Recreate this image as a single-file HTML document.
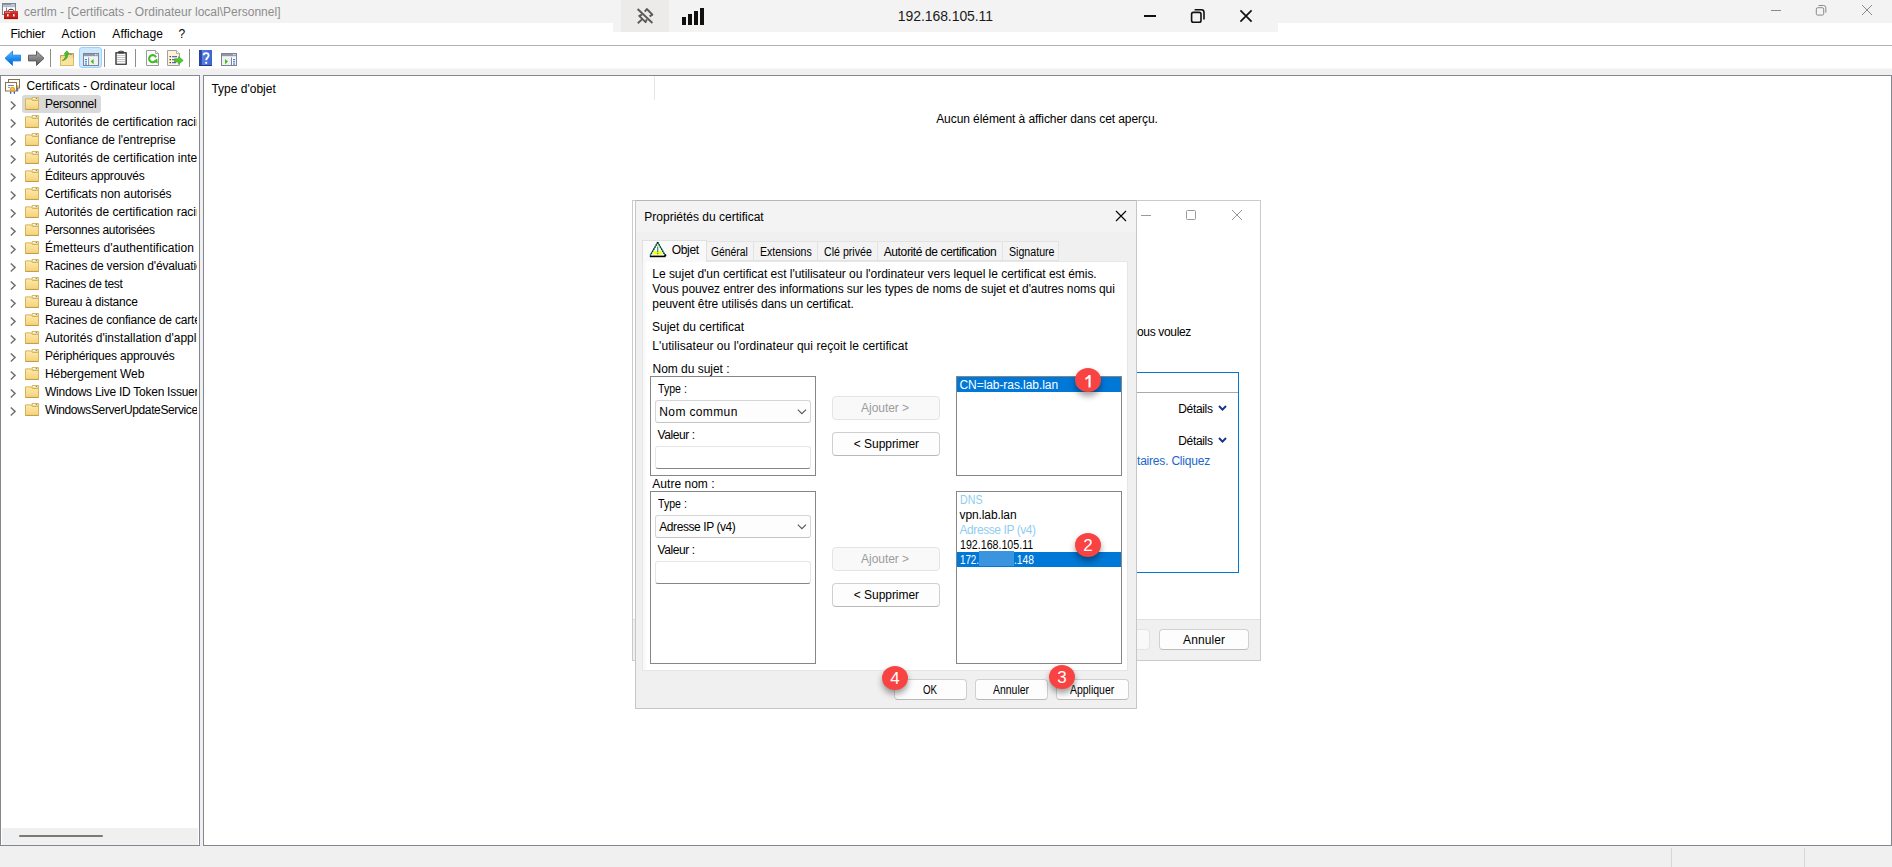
<!DOCTYPE html>
<html lang="fr">
<head>
<meta charset="utf-8">
<title>certlm</title>
<style>
*{box-sizing:border-box;margin:0;padding:0}
html,body{width:1892px;height:867px;overflow:hidden;background:#f0f0f0}
body{font-family:"Liberation Sans",sans-serif;font-size:12px;color:#000;position:relative}
.a{position:absolute}
.t{position:absolute;white-space:nowrap;line-height:16px;height:16px}
svg{position:absolute;overflow:visible}
/* main window */
#titlebar{left:0;top:0;width:1892px;height:23px;background:#f3f3f3}
#menubar{left:0;top:23px;width:1892px;height:22px;background:#fff}
#menuline{left:0;top:45px;width:1892px;height:1px;background:#b4b4b4}
#toolbar{left:0;top:46px;width:1892px;height:22px;background:#fff}
#toolgap{left:0;top:68px;width:1892px;height:7px;background:#f0f0f0;border-top:1px solid #f8f8f8}
#left{left:0;top:75px;width:200px;height:771px;background:#fff;border:1px solid #828790}
#right{left:203px;top:75px;width:1689px;height:771px;background:#fff;border:1px solid #828790}
#status{left:0;top:846px;width:1892px;height:21px;background:#f0f0f0}
.sep{position:absolute;top:49px;width:1px;height:18px;background:#8d8d8d}
.vs{position:absolute;top:848px;width:1px;height:19px;background:#d7d7d7}
/* tree */
#tree{left:1px;top:76px;width:196px;height:752px;overflow:hidden}
.row{position:absolute;left:44px;height:16px;line-height:16px;white-space:nowrap}
.chev{position:absolute;left:9px;width:6px;height:9px}
.fold{position:absolute;left:24px;width:15px;height:13px}
#selrow{left:21px;top:19px;width:79px;height:18px;background:#d9d9d9;border-radius:3px}
#hscroll{left:2px;top:828px;width:196px;height:17px;background:#f0f0f0}
#hthumb{left:19px;top:835px;width:84px;height:2px;background:#7a7a7a;border-radius:1px}
.bdg{position:absolute;width:26px;height:24px;border-radius:50%;background:#f94343;color:#fff;font-size:17px;line-height:26px;text-align:center;box-shadow:0 4px 6px rgba(0,0,0,.38)}
</style>
</head>
<body>
<svg width="0" height="0" style="position:absolute"><defs>
<linearGradient id="gF" x1="0" y1="0" x2="0" y2="1"><stop offset="0" stop-color="#ffeaa8"/><stop offset="1" stop-color="#f3d27a"/></linearGradient>
<symbol id="chv" viewBox="0 0 6 9"><path d="M0.8 0.5 L5 4.4 L0.8 8.4" fill="none" stroke="#707070" stroke-width="1.45"/></symbol>
<symbol id="fld" viewBox="0 0 15 13"><path d="M7 0.5 H13.5 V3.5 H7 Z" fill="#f7dc8e" stroke="#d9b760" stroke-width="1"/><rect x="8" y="1" width="4" height="1" fill="#fff"/><rect x="10.6" y="1" width="1.4" height="1" fill="#4b9cf0"/><path d="M0.5 1.9 H6 L7.6 3.5 H13.5 V12.4 H0.5 Z" fill="url(#gF)" stroke="#d6b35c" stroke-width="1"/><path d="M0.5 12.5 H13.5" stroke="#c49d4a" stroke-width="1"/></symbol>
</defs></svg>
<div class="a" id="titlebar"></div>
<div class="a" id="menubar"></div>
<div class="a" id="menuline"></div>
<div class="a" id="toolbar"></div>
<div class="a" id="toolgap"></div>
<div class="a" id="left"></div>
<div class="a" id="right"></div>
<div class="a" id="status"></div>
<div class="vs" style="left:1671px"></div>
<div class="vs" style="left:1804px"></div>

<!-- title + menu -->
<svg style="left:2px;top:3px;width:17px;height:17px" viewBox="0 0 17 17"><rect x="0.5" y="0.5" width="13" height="11" fill="#fff" stroke="#7d8594" stroke-width="1"/><rect x="1" y="1" width="12" height="1.6" fill="#8e98aa"/><rect x="1" y="3" width="12" height="1.2" fill="#b4bccb"/><rect x="9.6" y="1.1" width="1" height="1" fill="#fff"/><rect x="11.4" y="1.1" width="1" height="1" fill="#fff"/><rect x="4" y="4.6" width="1" height="4" fill="#6f7f9c"/><path d="M6 7.8 C7 5.8 11 5.8 12 7.8" fill="none" stroke="#1a1a1a" stroke-width="1"/><rect x="2" y="8" width="14" height="8.1" rx="0.8" fill="#c9231f"/><rect x="2" y="8" width="14" height="2" rx="0.8" fill="#d8362f"/><rect x="2" y="14.6" width="14" height="1.5" fill="#b00d0d"/><rect x="5" y="11" width="1.6" height="2.6" rx="0.5" fill="#e8f1f1"/><rect x="11" y="11" width="1.6" height="2.6" rx="0.5" fill="#e8f1f1"/><rect x="3.2" y="9" width="5" height="0.8" fill="#ec8a84"/></svg>
<span class="t" style="letter-spacing:0.008px;left:24px;top:4px;color:#8c8c8c">certlm - [Certificats - Ordinateur local\Personnel]</span>
<span class="t" style="letter-spacing:-0.217px;left:10.5px;top:26px">Fichier</span>
<span class="t" style="letter-spacing:0.140px;left:61.5px;top:26px">Action</span>
<span class="t" style="letter-spacing:0.108px;left:112.3px;top:26px">Affichage</span>
<span class="t" style="left:178.5px;top:26px">?</span>

<!-- toolbar separators -->
<div class="sep" style="left:50px"></div>
<div class="sep" style="left:104px"></div>
<div class="sep" style="left:135px"></div>
<div class="sep" style="left:189px"></div>
<svg width="0" height="0" style="position:absolute"><defs>
<linearGradient id="gB" x1="0" y1="0" x2="0" y2="1"><stop offset="0" stop-color="#6fc3ff"/><stop offset=".5" stop-color="#1e8ef0"/><stop offset="1" stop-color="#0a5fc8"/></linearGradient>
<linearGradient id="gG" x1="0" y1="0" x2="0" y2="1"><stop offset="0" stop-color="#b5b5b5"/><stop offset=".5" stop-color="#858585"/><stop offset="1" stop-color="#5c5c5c"/></linearGradient>
<linearGradient id="gH" x1="0" y1="0" x2="1" y2="0"><stop offset="0" stop-color="#24409e"/><stop offset=".22" stop-color="#2d4db4"/><stop offset=".25" stop-color="#5a7fe0"/><stop offset="1" stop-color="#3d63d2"/></linearGradient>
</defs></svg>
<!-- back / forward -->
<svg style="left:4px;top:50px;width:18px;height:17px" viewBox="0 0 18 17"><path d="M1 8.3 L8.5 1.2 V5.2 H16.5 V10.9 H8.5 V15.4 Z" fill="url(#gB)" stroke="#2a86e6" stroke-width="1" stroke-linejoin="round"/></svg>
<svg style="left:27px;top:50px;width:18px;height:17px" viewBox="0 0 18 17"><path d="M17 8.3 L9.5 1.2 V5.2 H1.5 V10.9 H9.5 V15.4 Z" fill="url(#gG)" stroke="#5a5a5a" stroke-width="1" stroke-linejoin="round"/></svg>
<!-- up folder -->
<svg style="left:60px;top:50px;width:15px;height:17px" viewBox="0 0 15 17"><path d="M0.5 5.5 H7.5 L8.5 3.5 H13.5 V15.5 H0.5 Z" fill="#f7d98a" stroke="#c9a048" stroke-width="1"/><rect x="10" y="4" width="2.4" height="1" fill="#4b9cf0"/><path d="M0.5 8 H13.5 V15.5 H0.5 Z" fill="#fbe7a8" opacity=".7"/><path d="M2.2 10.5 C4.5 9.5 5.8 7 5.8 4.2 L4 4.2 L6.8 0.8 L9.6 4.2 L7.8 4.2 C7.8 8 5.5 10.5 2.2 10.5 Z" fill="#43c02a" stroke="#2f9a1c" stroke-width=".6"/></svg>
<!-- show/hide tree (pressed) -->
<div class="a" style="left:79px;top:47px;width:23px;height:21px;background:#cce8ff;border:1px solid #99d1ff;border-radius:3px"></div>
<svg style="left:83px;top:53px;width:16px;height:13px" viewBox="0 0 16 13"><rect x="0.5" y="0.5" width="15" height="12" fill="#fff" stroke="#7d8594" stroke-width="1"/><rect x="1" y="1" width="14" height="2" fill="#8e98aa"/><rect x="1" y="3" width="14" height="1.4" fill="#dfe3ea"/><rect x="12" y="1.2" width="1" height="1" fill="#fff"/><rect x="13.6" y="1.2" width="1" height="1" fill="#fff"/><rect x="5.2" y="4.5" width="1" height="8" fill="#7d8594"/><rect x="1.8" y="6" width="2.2" height="1.2" fill="#2f7de0"/><rect x="1.8" y="8.2" width="2.2" height="1.2" fill="#2f7de0"/><rect x="1.8" y="10.4" width="2.2" height="1.2" fill="#2f7de0"/><rect x="6.5" y="5" width="8.5" height="7" fill="#f1f1f1"/><path d="M10.6 6 V11.2 L7.6 8.6 Z" fill="#3fbf22"/></svg>
<!-- clipboard -->
<svg style="left:115px;top:50px;width:13px;height:16px" viewBox="0 0 13 16"><rect x="0.2" y="2" width="11.8" height="13" rx="0.8" fill="#4d4d4d"/><rect x="1.8" y="3.6" width="8.6" height="10" fill="#fff"/><path d="M2 5.6 H10.2 M2 7.6 H10.2 M2 9.6 H10.2 M2 11.6 H10.2" stroke="#b9b9b9" stroke-width=".9"/><rect x="3.4" y="1" width="5.4" height="2.6" rx="0.6" fill="#3c3c3c"/><rect x="4.8" y="0.6" width="2.6" height="1.2" fill="#777"/></svg>
<!-- refresh -->
<svg style="left:146px;top:50px;width:14px;height:17px" viewBox="0 0 14 17"><path d="M0.5 0.5 H9.5 L12.5 3.5 V15.5 H0.5 Z" fill="#fdfdfd" stroke="#9a9a9a" stroke-width="1"/><path d="M9.5 0.5 V3.5 H12.5" fill="#e9e9e9" stroke="#9a9a9a" stroke-width=".8"/><path d="M9.3 11.2 A3.6 3.6 0 1 1 10 7.2" fill="none" stroke="#3fbb23" stroke-width="2.1"/><path d="M7.2 11.2 L11.8 13.4 L11.2 8.6 Z" fill="#3fbb23"/></svg>
<!-- export list -->
<svg style="left:167px;top:50px;width:17px;height:17px" viewBox="0 0 17 17"><path d="M0.5 0.5 H9.5 L12.5 3.5 V15.5 H0.5 Z" fill="#fbf4d6" stroke="#a0a0a0" stroke-width="1"/><path d="M9.5 0.5 V3.5 H12.5" fill="#fff" stroke="#a0a0a0" stroke-width=".8"/><rect x="2.6" y="6" width="1.2" height="1.2" fill="#222"/><rect x="2.6" y="9" width="1.2" height="1.2" fill="#222"/><rect x="2.6" y="12" width="1.2" height="1.2" fill="#222"/><path d="M5 6.6 H10 M5 9.6 H8 M5 12.6 H9" stroke="#6a62c8" stroke-width="1.1"/><path d="M7.6 8.8 H11.6 V6.6 L16.2 10.4 L11.6 14.2 V12 H7.6 Z" fill="#52c832" stroke="#2f9a1c" stroke-width=".6"/></svg>
<!-- help -->
<svg style="left:199px;top:50px;width:13px;height:16px" viewBox="0 0 13 16"><rect x="0" y="0" width="13" height="16" fill="url(#gH)"/><rect x="0" y="15" width="13" height="1" fill="#1c3690"/><path d="M4.6 5.2 C4.6 2.4 9.6 2.4 9.6 5.4 C9.6 7.6 7.2 7.6 7.2 10.2" fill="none" stroke="#fff" stroke-width="1.9"/><circle cx="7.2" cy="12.8" r="1.15" fill="#fff"/></svg>
<!-- show action pane -->
<svg style="left:221px;top:53px;width:16px;height:13px" viewBox="0 0 16 13"><rect x="0.5" y="0.5" width="15" height="12" fill="#fff" stroke="#7d8594" stroke-width="1"/><rect x="1" y="1" width="14" height="2" fill="#8e98aa"/><rect x="1" y="3" width="14" height="1.4" fill="#dfe3ea"/><rect x="12" y="1.2" width="1" height="1" fill="#fff"/><rect x="13.6" y="1.2" width="1" height="1" fill="#fff"/><rect x="10" y="4.5" width="1" height="8" fill="#7d8594"/><rect x="12" y="6" width="2.2" height="1.2" fill="#2f7de0"/><rect x="12" y="8.2" width="2.2" height="1.2" fill="#2f7de0"/><rect x="12" y="10.4" width="2.2" height="1.2" fill="#2f7de0"/><rect x="1" y="5" width="8.8" height="7" fill="#f1f1f1"/><path d="M4 6 V11.2 L7 8.6 Z" fill="#3fbf22"/></svg>

<!-- tree -->
<div class="a" id="tree">
<div class="a" id="selrow"></div>
<svg style="left:4px;top:2px;width:16px;height:17px" viewBox="0 0 16 17">
<rect x="3.5" y="1.5" width="11" height="8.5" fill="#fffdf6" stroke="#8a7250" stroke-width="1"/>
<rect x="0.5" y="4.5" width="11" height="8.5" fill="#fffdf6" stroke="#8a7250" stroke-width="1"/>
<rect x="3" y="7" width="6" height="1" fill="#6f7fd6"/><rect x="3" y="9" width="2" height="1" fill="#8f9be0"/>
<path d="M5.2 13 L5 16 L6.8 15 Z M9.8 13 L10 16 L8.2 15 Z" fill="#1c4fe0"/>
<rect x="12.2" y="10" width="1" height="3.4" fill="#1c4fe0"/><rect x="12" y="7.4" width="1.4" height="2.8" fill="#e2a11e"/>
<circle cx="7.5" cy="11.3" r="2.6" fill="#e6a51f"/><circle cx="7.5" cy="11" r="1.2" fill="#f6c95a"/>
</svg>
<span class="row" style="letter-spacing:-0.007px;left:25.4px;top:2px">Certificats - Ordinateur local</span>
<svg class="chev" style="top:25px" viewBox="0 0 6 9"><use href="#chv"/></svg>
<svg class="fold" style="top:21px" viewBox="0 0 15 13"><use href="#fld"/></svg>
<span class="row" style="top:20px"><span style="letter-spacing:-0.305px;">Personnel</span></span>
<svg class="chev" style="top:43px" viewBox="0 0 6 9"><use href="#chv"/></svg>
<svg class="fold" style="top:39px" viewBox="0 0 15 13"><use href="#fld"/></svg>
<span class="row" style="top:38px"><span style="letter-spacing:0.009px;">Autorités de certification raci</span>nes de confiance</span>
<svg class="chev" style="top:61px" viewBox="0 0 6 9"><use href="#chv"/></svg>
<svg class="fold" style="top:57px" viewBox="0 0 15 13"><use href="#fld"/></svg>
<span class="row" style="top:56px"><span style="letter-spacing:-0.067px;">Confiance de l'entreprise</span></span>
<svg class="chev" style="top:79px" viewBox="0 0 6 9"><use href="#chv"/></svg>
<svg class="fold" style="top:75px" viewBox="0 0 15 13"><use href="#fld"/></svg>
<span class="row" style="top:74px"><span style="letter-spacing:0.050px;">Autorités de certification inte</span>rmédiaires</span>
<svg class="chev" style="top:97px" viewBox="0 0 6 9"><use href="#chv"/></svg>
<svg class="fold" style="top:93px" viewBox="0 0 15 13"><use href="#fld"/></svg>
<span class="row" style="top:92px"><span style="letter-spacing:-0.211px;">Éditeurs approuvés</span></span>
<svg class="chev" style="top:115px" viewBox="0 0 6 9"><use href="#chv"/></svg>
<svg class="fold" style="top:111px" viewBox="0 0 15 13"><use href="#fld"/></svg>
<span class="row" style="top:110px"><span style="letter-spacing:-0.089px;">Certificats non autorisés</span></span>
<svg class="chev" style="top:133px" viewBox="0 0 6 9"><use href="#chv"/></svg>
<svg class="fold" style="top:129px" viewBox="0 0 15 13"><use href="#fld"/></svg>
<span class="row" style="top:128px"><span style="letter-spacing:0.009px;">Autorités de certification raci</span>ne tierce partie</span>
<svg class="chev" style="top:151px" viewBox="0 0 6 9"><use href="#chv"/></svg>
<svg class="fold" style="top:147px" viewBox="0 0 15 13"><use href="#fld"/></svg>
<span class="row" style="top:146px"><span style="letter-spacing:-0.324px;">Personnes autorisées</span></span>
<svg class="chev" style="top:169px" viewBox="0 0 6 9"><use href="#chv"/></svg>
<svg class="fold" style="top:165px" viewBox="0 0 15 13"><use href="#fld"/></svg>
<span class="row" style="top:164px"><span style="letter-spacing:0.046px;">Émetteurs d'authentification</span> de client</span>
<svg class="chev" style="top:187px" viewBox="0 0 6 9"><use href="#chv"/></svg>
<svg class="fold" style="top:183px" viewBox="0 0 15 13"><use href="#fld"/></svg>
<span class="row" style="top:182px"><span style="letter-spacing:-0.163px;">Racines de version d'évaluati</span>on</span>
<svg class="chev" style="top:205px" viewBox="0 0 6 9"><use href="#chv"/></svg>
<svg class="fold" style="top:201px" viewBox="0 0 15 13"><use href="#fld"/></svg>
<span class="row" style="top:200px"><span style="letter-spacing:-0.355px;">Racines de test</span></span>
<svg class="chev" style="top:223px" viewBox="0 0 6 9"><use href="#chv"/></svg>
<svg class="fold" style="top:219px" viewBox="0 0 15 13"><use href="#fld"/></svg>
<span class="row" style="top:218px"><span style="letter-spacing:-0.243px;">Bureau à distance</span></span>
<svg class="chev" style="top:241px" viewBox="0 0 6 9"><use href="#chv"/></svg>
<svg class="fold" style="top:237px" viewBox="0 0 15 13"><use href="#fld"/></svg>
<span class="row" style="top:236px"><span style="letter-spacing:-0.199px;">Racines de confiance de cart</span>e à puce</span>
<svg class="chev" style="top:259px" viewBox="0 0 6 9"><use href="#chv"/></svg>
<svg class="fold" style="top:255px" viewBox="0 0 15 13"><use href="#fld"/></svg>
<span class="row" style="top:254px"><span style="letter-spacing:0.004px;">Autorités d'installation d'app</span>lications</span>
<svg class="chev" style="top:277px" viewBox="0 0 6 9"><use href="#chv"/></svg>
<svg class="fold" style="top:273px" viewBox="0 0 15 13"><use href="#fld"/></svg>
<span class="row" style="top:272px"><span style="letter-spacing:-0.171px;">Périphériques approuvés</span></span>
<svg class="chev" style="top:295px" viewBox="0 0 6 9"><use href="#chv"/></svg>
<svg class="fold" style="top:291px" viewBox="0 0 15 13"><use href="#fld"/></svg>
<span class="row" style="top:290px"><span style="letter-spacing:-0.080px;">Hébergement Web</span></span>
<svg class="chev" style="top:313px" viewBox="0 0 6 9"><use href="#chv"/></svg>
<svg class="fold" style="top:309px" viewBox="0 0 15 13"><use href="#fld"/></svg>
<span class="row" style="top:308px"><span style="letter-spacing:-0.260px;">Windows Live ID Token Issue</span>r</span>
<svg class="chev" style="top:331px" viewBox="0 0 6 9"><use href="#chv"/></svg>
<svg class="fold" style="top:327px" viewBox="0 0 15 13"><use href="#fld"/></svg>
<span class="row" style="top:326px"><span style="letter-spacing:-0.386px;">WindowsServerUpdateService</span>s</span>
</div>
<div class="a" id="hscroll"></div>
<div class="a" id="hthumb"></div>

<!-- right pane -->
<span class="t" style="letter-spacing:0.005px;left:211.4px;top:81px">Type d'objet</span>
<div class="a" style="left:654px;top:76px;width:1px;height:24px;background:#e5e5e5"></div>
<span class="t" style="letter-spacing:-0.073px;left:936.2px;top:111px">Aucun élément à afficher dans cet aperçu.</span>

<!-- RDP connection bar -->
<div class="a" style="left:613px;top:0;width:665px;height:32px;background:#f3f3f3"></div>
<div class="a" style="left:621px;top:0;width:48px;height:32px;background:#edebe9"></div>
<svg style="left:636px;top:7px;width:18px;height:18px" viewBox="0 0 18 18"><g fill="none" stroke="#5b5a58" stroke-width="1.9" stroke-linecap="butt" stroke-linejoin="round"><path d="M1.6 2 L16.4 16"/><path d="M8.8 4.6 L10.8 2 L16.4 7.6 L13.6 9.4"/><path d="M6 7.6 L3.2 8.8 L9.6 15.2 L10.8 12.4"/><path d="M6 12.4 L1.8 16.2"/></g></svg>
<div class="a" style="left:682px;top:17px;width:4px;height:8px;background:#12100e"></div>
<div class="a" style="left:688px;top:14px;width:4px;height:11px;background:#12100e"></div>
<div class="a" style="left:694px;top:11px;width:4px;height:14px;background:#12100e"></div>
<div class="a" style="left:700px;top:8px;width:4px;height:17px;background:#12100e"></div>
<span class="t" style="letter-spacing:-0.077px;left:897.8px;top:7px;font-size:14px;line-height:18px;height:18px;color:#1b1b1b">192.168.105.11</span>
<div class="a" style="left:1144px;top:15px;width:12px;height:2px;background:#111"></div>
<svg style="left:1190px;top:8px;width:16px;height:16px" viewBox="0 0 16 16"><g fill="none" stroke="#111" stroke-width="1.6"><rect x="1.6" y="4.4" width="9.4" height="9.8" rx="1.8"/><path d="M4.6 1.8 H11.4 A2.6 2.6 0 0 1 14 4.4 V11.4"/></g></svg>
<svg style="left:1239px;top:9px;width:14px;height:14px" viewBox="0 0 14 14"><path d="M1.4 1.4 L12.6 12.6 M12.6 1.4 L1.4 12.6" stroke="#111" stroke-width="1.7"/></svg>
<!-- main window controls (inactive) -->
<div class="a" style="left:1771px;top:10px;width:10px;height:1px;background:#8a8a8a"></div>
<svg style="left:1815px;top:4px;width:12px;height:12px" viewBox="0 0 12 12"><g fill="none" stroke="#8a8a8a" stroke-width="1"><rect x="1.3" y="3.7" width="7.4" height="7.4" rx="1.4"/><path d="M3.6 1.5 H8.6 A2.2 2.2 0 0 1 10.8 3.7 V8.7"/></g></svg>
<svg style="left:1861px;top:4px;width:12px;height:12px" viewBox="0 0 12 12"><path d="M1 1 L11 11 M11 1 L1 11" stroke="#8a8a8a" stroke-width="1"/></svg>
<!-- background wizard window -->
<div class="a" style="left:632px;top:200px;width:629px;height:461px;background:#fff;border:1px solid #cbcbcb"></div>
<div class="a" style="left:633px;top:619px;width:627px;height:41px;background:#f0f0f0;border-top:1px solid #dfdfdf"></div>
<div class="a" style="left:1141px;top:215px;width:10px;height:1px;background:#9a9a9a"></div>
<div class="a" style="left:1186px;top:210px;width:10px;height:10px;border:1px solid #9a9a9a;border-radius:1.5px"></div>
<svg style="left:1232px;top:210px;width:10px;height:10px" viewBox="0 0 10 10"><path d="M0 0 L10 10 M10 0 L0 10" stroke="#9a9a9a" stroke-width="1"/></svg>
<span class="t" style="letter-spacing:-0.338px;left:1137px;top:323.5px">ous voulez</span>
<div class="a" style="left:1000px;top:372px;width:239px;height:201px;border:1px solid #0078d7;background:#fff"></div>
<div class="a" style="left:1001px;top:392px;width:237px;height:1px;background:#a9a9a9"></div>
<span class="t" style="letter-spacing:-0.341px;left:1178.3px;top:400.5px">Détails</span>
<span class="t" style="letter-spacing:-0.341px;left:1178.3px;top:432.5px">Détails</span>
<svg style="left:1218px;top:405px;width:9px;height:7px" viewBox="0 0 9 7"><path d="M1 1 L4.5 4.6 L8 1" fill="none" stroke="#17318a" stroke-width="1.9"/></svg>
<svg style="left:1218px;top:437px;width:9px;height:7px" viewBox="0 0 9 7"><path d="M1 1 L4.5 4.6 L8 1" fill="none" stroke="#17318a" stroke-width="1.9"/></svg>
<span class="t" style="letter-spacing:-0.202px;left:1137px;top:453px;color:#1a66cc">taires. Cliquez</span>
<div class="a" style="left:1061px;top:629px;width:89px;height:21px;background:#f9f9f9;border:1px solid #e3e3e3;border-radius:4px"></div>
<div class="a" style="left:1159px;top:629px;width:90px;height:21px;background:#fdfdfd;border:1px solid #d0d0d0;border-bottom-color:#bdbdbd;border-radius:4px"></div>
<span class="t" style="letter-spacing:0.089px;left:1183.1px;top:632px">Annuler</span>
<!-- properties dialog -->
<div class="a" style="left:635px;top:200px;width:502px;height:509px;background:#f0f0f0;border:1px solid #c6c6c6;border-top-color:#b6b6b6"></div>
<div class="a" style="left:636px;top:201px;width:500px;height:31px;background:#f3f3f3"></div>
<span class="t" style="letter-spacing:0.000px;left:644.3px;top:209px">Propriétés du certificat</span>
<svg style="left:1116px;top:211px;width:10px;height:10px" viewBox="0 0 10 10"><path d="M0 0 L10 10 M10 0 L0 10" stroke="#000" stroke-width="1.1"/></svg>
<!-- tab strip -->
<div class="a" style="left:706px;top:241px;width:353px;height:20px;background:#f3f3f3;border:1px solid #e3e3e3;border-left:0"></div>
<div class="a" style="left:753px;top:242px;width:1px;height:19px;background:#e3e3e3"></div>
<div class="a" style="left:817px;top:242px;width:1px;height:19px;background:#e3e3e3"></div>
<div class="a" style="left:877px;top:242px;width:1px;height:19px;background:#e3e3e3"></div>
<div class="a" style="left:1002px;top:242px;width:1px;height:19px;background:#e3e3e3"></div>
<!-- tab body -->
<div class="a" style="left:642px;top:261px;width:486px;height:410px;background:#f9f9f9;border:1px solid #e6e6e6"></div>
<div class="a" style="left:646px;top:262px;width:481px;height:408px;background:#fff"></div>
<div class="a" style="left:642px;top:240px;width:65px;height:22px;background:#f9f9f9;border:1px solid #e0e0e0;border-bottom:0"></div>
<svg style="left:649px;top:241px;width:18px;height:17px" viewBox="0 0 18 17"><path d="M8.7 1.4 L16.2 14.4 H1.2 Z" fill="#fff"/><path d="M5.2 10 H12.2 L13.8 13.4 H3.4 Z" fill="#ffff00"/><path d="M8.7 1.4 L16.2 14.4" fill="none" stroke="#1b9c9c" stroke-width="1.2"/><path d="M8.7 1.4 L1.2 14.4" fill="none" stroke="#1b9c9c" stroke-width="1.2"/><path d="M8.7 1.4 L16.2 14.4 M8.7 1.4 L1.2 14.4" fill="none" stroke="#0a0a0a" stroke-width="1.3" stroke-dasharray="1.1 1.3"/><rect x="8.1" y="4" width="1.2" height="1.8" fill="#ffe100"/><rect x="8.1" y="5.8" width="1.2" height="5.4" fill="#2a8d9c"/><rect x="8.1" y="12" width="1.2" height="1.3" fill="#2a8d9c"/><path d="M0.8 15.4 H16.6" stroke="#000" stroke-width="1.6"/><circle cx="16.4" cy="14.3" r="1" fill="#000"/></svg>
<span class="t" style="letter-spacing:-0.317px;left:671.7px;top:242px">Objet</span>
<span class="t" style="display:inline-block;transform-origin:0 50%;transform:scaleX(0.8618);left:710.6px;top:244px">Général</span>
<span class="t" style="display:inline-block;transform-origin:0 50%;transform:scaleX(0.8807);left:759.5px;top:244px">Extensions</span>
<span class="t" style="display:inline-block;transform-origin:0 50%;transform:scaleX(0.8847);left:823.5px;top:244px">Clé privée</span>
<span class="t" style="letter-spacing:-0.374px;left:883.7px;top:244px">Autorité de certification</span>
<span class="t" style="display:inline-block;transform-origin:0 50%;transform:scaleX(0.8856);left:1008.5px;top:244px">Signature</span>
<!-- page text -->
<span class="t" style="letter-spacing:-0.029px;left:652.3px;top:266px">Le sujet d'un certificat est l'utilisateur ou l'ordinateur vers lequel le certificat est émis.</span>
<span class="t" style="letter-spacing:-0.101px;left:652.3px;top:281px">Vous pouvez entrer des informations sur les types de noms de sujet et d'autres noms qui</span>
<span class="t" style="letter-spacing:-0.066px;left:652.3px;top:296px">peuvent être utilisés dans un certificat.</span>
<span class="t" style="letter-spacing:-0.002px;left:652px;top:319px">Sujet du certificat</span>
<span class="t" style="letter-spacing:0.064px;left:652.3px;top:338px">L'utilisateur ou l'ordinateur qui reçoit le certificat</span>
<span class="t" style="letter-spacing:-0.027px;left:652.5px;top:360.5px">Nom du sujet :</span>
<span class="t" style="letter-spacing:0.024px;left:652.3px;top:476px">Autre nom :</span>
<div class="a" style="left:650px;top:376px;width:166px;height:100px;border:1px solid #868686;background:#fff"></div>
<span class="t" style="display:inline-block;transform-origin:0 50%;transform:scaleX(0.8841);left:658.4px;top:380.5px">Type :</span>
<div class="a" style="left:655px;top:400px;width:156px;height:23px;background:#fdfdfd;border:1px solid #d6d6d6;border-bottom-color:#c4c4c4;border-radius:3px"></div>
<span class="t" style="letter-spacing:0.371px;left:659.3px;top:404px">Nom commun</span>
<svg style="left:797px;top:409px;width:10px;height:6px" viewBox="0 0 10 6"><path d="M0.8 0.6 L4.9 4.7 L9 0.6" fill="none" stroke="#555" stroke-width="1.1"/></svg>
<span class="t" style="letter-spacing:-0.421px;left:657.5px;top:427px">Valeur :</span>
<div class="a" style="left:655px;top:446px;width:156px;height:23px;background:#fff;border:1px solid #e6e6e6;border-bottom:1px solid #868686;border-radius:3px"></div>
<div class="a" style="left:832px;top:396px;width:108px;height:24px;background:#f9f9f9;border:1px solid #e4e4e4;border-radius:4px"></div>
<span class="t" style="letter-spacing:-0.042px;left:861.1px;top:399.5px;color:#9c9c9c">Ajouter &gt;</span>
<div class="a" style="left:832px;top:432px;width:108px;height:24px;background:#fdfdfd;border:1px solid #d0d0d0;border-bottom-color:#b9b9b9;border-radius:4px"></div>
<span class="t" style="letter-spacing:-0.046px;left:853.8px;top:436px">&lt; Supprimer</span>
<div class="a" style="left:956px;top:376px;width:166px;height:100px;border:1px solid #868686;background:#fff"></div>
<div class="a" style="left:650px;top:491px;width:166px;height:173px;border:1px solid #868686;background:#fff"></div>
<span class="t" style="display:inline-block;transform-origin:0 50%;transform:scaleX(0.8841);left:658.4px;top:495.5px">Type :</span>
<div class="a" style="left:655px;top:515px;width:156px;height:23px;background:#fdfdfd;border:1px solid #d6d6d6;border-bottom-color:#c4c4c4;border-radius:3px"></div>
<span class="t" style="letter-spacing:-0.426px;left:659.3px;top:519px">Adresse IP (v4)</span>
<svg style="left:797px;top:524px;width:10px;height:6px" viewBox="0 0 10 6"><path d="M0.8 0.6 L4.9 4.7 L9 0.6" fill="none" stroke="#555" stroke-width="1.1"/></svg>
<span class="t" style="letter-spacing:-0.421px;left:657.5px;top:542px">Valeur :</span>
<div class="a" style="left:655px;top:561px;width:156px;height:23px;background:#fff;border:1px solid #e6e6e6;border-bottom:1px solid #868686;border-radius:3px"></div>
<div class="a" style="left:832px;top:547px;width:108px;height:24px;background:#f9f9f9;border:1px solid #e4e4e4;border-radius:4px"></div>
<span class="t" style="letter-spacing:-0.042px;left:861.1px;top:550.5px;color:#9c9c9c">Ajouter &gt;</span>
<div class="a" style="left:832px;top:583px;width:108px;height:24px;background:#fdfdfd;border:1px solid #d0d0d0;border-bottom-color:#b9b9b9;border-radius:4px"></div>
<span class="t" style="letter-spacing:-0.046px;left:853.8px;top:587px">&lt; Supprimer</span>
<div class="a" style="left:956px;top:491px;width:166px;height:173px;border:1px solid #868686;background:#fff"></div>
<!-- list contents -->
<div class="a" style="left:957px;top:377px;width:164px;height:15px;background:#0078d7"></div>
<span class="t" style="letter-spacing:-0.068px;left:959.5px;top:376.5px;color:#fff">CN=lab-ras.lab.lan</span>
<span class="t" style="display:inline-block;transform-origin:0 50%;transform:scaleX(0.8878);left:959.5px;top:491.5px;color:#8fcdf0">DNS</span>
<span class="t" style="letter-spacing:-0.095px;left:959.5px;top:506.5px">vpn.lab.lan</span>
<span class="t" style="letter-spacing:-0.419px;left:959.5px;top:521.5px;color:#8fcdf0">Adresse IP (v4)</span>
<span class="t" style="display:inline-block;transform-origin:0 50%;transform:scaleX(0.8869);left:959.8px;top:536.5px">192.168.105.11</span>
<div class="a" style="left:957px;top:552px;width:164px;height:15px;background:#0078d7"></div>
<span class="t" style="display:inline-block;transform-origin:0 50%;transform:scaleX(0.8134);left:959.8px;top:551.5px;color:#fff">172.</span>
<div class="a" style="left:979px;top:551px;width:35px;height:15px;background:#3a94de"></div>
<span class="t" style="display:inline-block;transform-origin:0 50%;transform:scaleX(0.8562);left:1014px;top:551.5px;color:#fff">.148</span>
<!-- bottom buttons -->
<div class="a" style="left:894px;top:679px;width:73px;height:21px;background:#fdfdfd;border:1px solid #d0d0d0;border-bottom-color:#b9b9b9;border-radius:4px"></div>
<div class="a" style="left:975px;top:679px;width:73px;height:21px;background:#fdfdfd;border:1px solid #d0d0d0;border-bottom-color:#b9b9b9;border-radius:4px"></div>
<div class="a" style="left:1056px;top:679px;width:73px;height:21px;background:#fdfdfd;border:1px solid #d0d0d0;border-bottom-color:#b9b9b9;border-radius:4px"></div>
<span class="t" style="display:inline-block;transform-origin:0 50%;transform:scaleX(0.8130);left:922.5px;top:682px">OK</span>
<span class="t" style="display:inline-block;transform-origin:0 50%;transform:scaleX(0.8701);left:993px;top:682px">Annuler</span>
<span class="t" style="display:inline-block;transform-origin:0 50%;transform:scaleX(0.8717);left:1069.7px;top:682px">Appliquer</span>
<!-- numbered badges -->
<div class="bdg" style="left:1075px;top:368.4px"><svg style="left:9.6px;top:6.8px;width:6px;height:13px" viewBox="0 0 6 13"><path d="M3.6 0 H5.6 V12.4 H3.5 V2.9 C2.6 3.8 1.5 4.4 0.3 4.8 V2.9 C1.7 2.3 2.9 1.3 3.6 0 Z" fill="#fff"/></svg></div>
<div class="bdg" style="left:1075px;top:532.6px">2</div>
<div class="bdg" style="left:1049px;top:665.4px">3</div>
<div class="bdg" style="left:882px;top:665.5px">4</div>
</body>
</html>
